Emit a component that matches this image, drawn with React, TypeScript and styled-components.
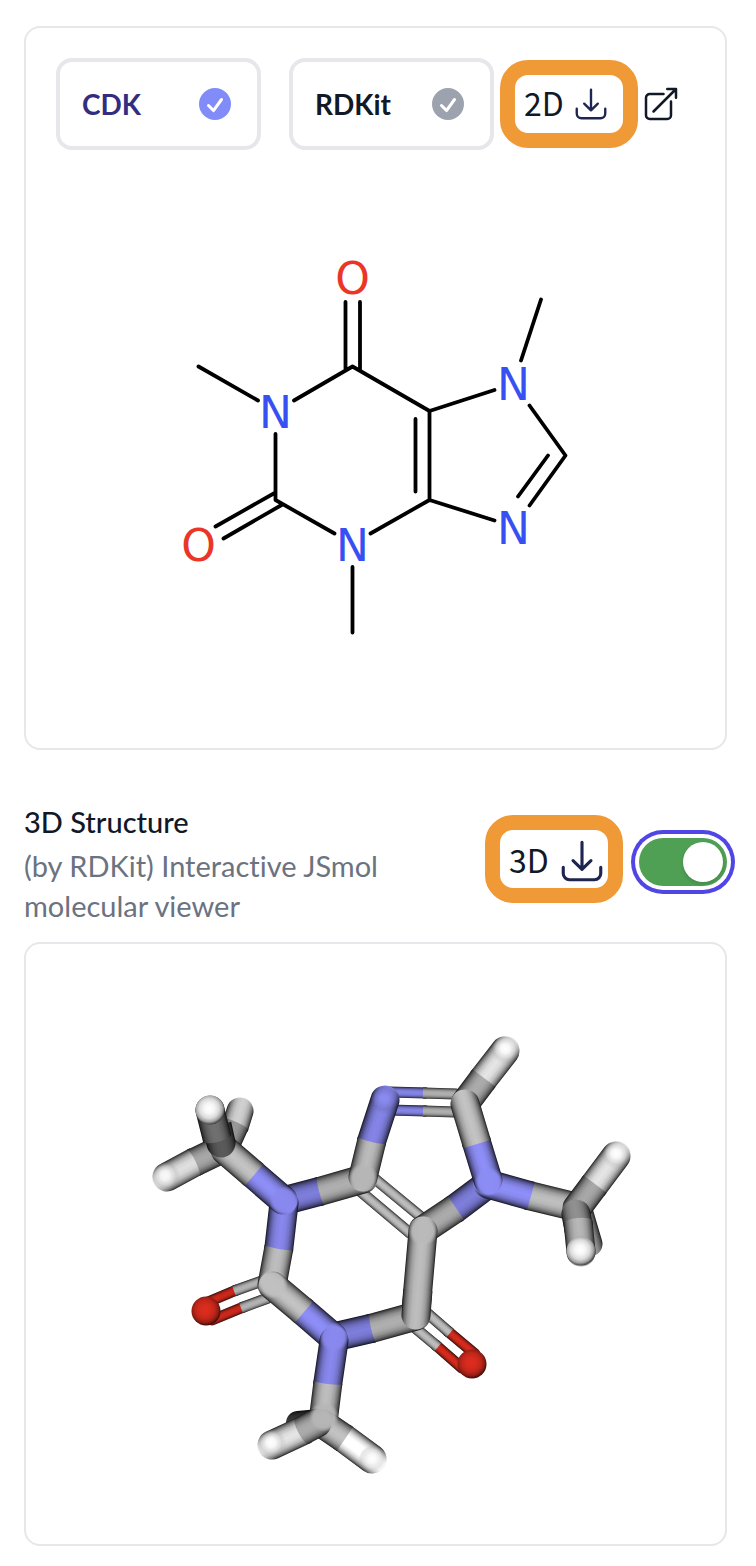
import React, { useState } from "react";
import styled, { createGlobalStyle } from "styled-components";

const GlobalStyle = createGlobalStyle`
  *, *::before, *::after { box-sizing: border-box; }
  body {
    margin: 0;
    background: #ffffff;
    color: #111827;
    font-family: Lato, "Open Sans", sans-serif;
    font-variant-ligatures: none;
  }
`;

const Page = styled.main`
  padding: 26px 29px 20px 24px;
`;

const Panel = styled.section`
  border: 2px solid #e5e7eb;
  border-radius: 16px;
  background: #ffffff;
`;

const Toolbar = styled.div`
  display: flex;
  align-items: center;
  gap: 6px;
  padding: 30px 30px 0;
`;

const Options = styled.div`
  display: flex;
  flex: 0 1 438px;
  gap: 28px;
`;

const Option = styled.label<{ $active: boolean }>`
  display: flex;
  flex: 1;
  align-items: center;
  justify-content: space-between;
  height: 92px;
  padding: 0 22px;
  border: 4px solid #e5e7eb;
  border-radius: 16px;
  font-size: 28px;
  font-weight: 700;
  line-height: 40px;
  color: ${(p) => (p.$active ? "#312e81" : "#111827")};
  cursor: pointer;

  svg {
    fill: ${(p) => (p.$active ? "#818cf8" : "#9ca3af")};
  }
`;

const HiddenRadio = styled.input`
  appearance: none;
  width: 0;
  height: 0;
  margin: 0;
`;

const Actions = styled.div`
  display: flex;
  flex: none;
  align-items: center;
  gap: 3px;
`;

const DownloadButton = styled.button`
  display: flex;
  flex: none;
  align-items: center;
  gap: 8px;
  width: 138px;
  height: 88px;
  padding: 0 0 0 9px;
  border: 15px solid #f09937;
  border-radius: 28px;
  background: #ffffff;
  color: #111827;
  font-family: "Noto Sans CJK SC", "Noto Sans", sans-serif;
  font-size: 32px;
  line-height: 40px;
  cursor: pointer;

  svg {
    flex: none;
    color: #1e2550;
  }
`;

const ButtonLabel = styled.span`
  padding-bottom: 4px;
`;

const IconLink = styled.a`
  display: flex;
  flex: none;
  color: #111827;
`;

const Drawing = styled.svg`
  display: block;
  width: 100%;
  height: auto;
`;

const AtomLabel = styled.text<{ $element: "N" | "O" }>`
  font-family: "DejaVu Sans", sans-serif;
  font-size: 44px;
  text-anchor: middle;
  fill: ${(p) => (p.$element === "N" ? "#3850f2" : "#ea3628")};
`;

const SectionHeader = styled.header`
  display: flex;
  align-items: center;
  gap: 16px;
  padding: 48px 0 16px;
`;

const Heading = styled.div`
  flex: 1;
  font-size: 29px;
`;

const Title = styled.h2`
  margin: 0;
  font-size: inherit;
  font-weight: 500;
  line-height: 48px;
`;

const Description = styled.p`
  max-width: 400px;
  margin: 0;
  color: #6b7280;
  line-height: 40px;
`;

const HeaderDownload = styled(DownloadButton)`
  align-self: flex-start;
  margin-top: 17px;
  padding-top: 4px;
`;

const Switch = styled.input`
  appearance: none;
  flex: none;
  width: 88px;
  height: 48px;
  margin: 0;
  padding: 4px;
  border-radius: 24px;
  background: #9ca3af;
  box-shadow: 0 0 0 4px #ffffff, 0 0 0 8px #4f46e5;
  cursor: pointer;

  &::before {
    content: "";
    display: block;
    width: 40px;
    height: 40px;
    border-radius: 50%;
    background: #ffffff;
    box-shadow: 0 2px 4px rgba(0, 0, 0, 0.15);
  }

  &:checked {
    background: #4fa055;
  }

  &:checked::before {
    margin-left: 40px;
  }
`;

function CheckIcon() {
  return (
    <svg width="40" height="40" viewBox="0 0 20 20" aria-hidden="true">
      <path
        fillRule="evenodd"
        d="M10 18a8 8 0 100-16 8 8 0 000 16zm3.857-9.809a.75.75 0 00-1.214-.882l-3.483 4.79-1.88-1.88a.75.75 0 10-1.06 1.061l2.5 2.5a.75.75 0 001.137-.089l4-5.5z"
      />
    </svg>
  );
}

function StrokeIcon({ size, d }: { size: number; d: string }) {
  return (
    <svg
      width={size}
      height={size}
      viewBox="0 0 24 24"
      fill="none"
      stroke="currentColor"
      strokeWidth="1.5"
      strokeLinecap="round"
      strokeLinejoin="round"
      aria-hidden="true"
    >
      <path d={d} />
    </svg>
  );
}

const DOWNLOAD =
  "M3 15v3A3 3 0 006 21h12A3 3 0 0021 18V15M16.3 11.8L12 16m0 0L7.7 11.8m4.3 4.2V3";
const EXTERNAL =
  "M13.5 6H5.25A2.25 2.25 0 003 8.25v10.5A2.25 2.25 0 005.25 21h10.5A2.25 2.25 0 0018 18.75V10.5m-10.5 6L21 3m0 0h-5.25M21 3v5.25";

const FLAT_BONDS = [
  "M345.5 302V369M360 302V370",
  "M294 400.5L352.5 366.5L429.5 411V500L370.5 533.5",
  "M198.5 366.5L258 400.5",
  "M275.5 434V500L334.5 533.5",
  "M275.5 492.5L215.5 526.5M282.5 504.5L223.5 538.5",
  "M352.5 567V632.5",
  "M415.5 419V491.5",
  "M429.5 411L494.5 390M429.5 500L494.5 520.5",
  "M521 360.5L541 299.5",
  "M529.5 405.5L565.5 455.5L529.5 505.5M548 455.5L518 496.5",
];

const FLAT_ATOMS: Array<["N" | "O", number, number]> = [
  ["O", 352.5, 278],
  ["O", 198.5, 545],
  ["N", 275.5, 411.5],
  ["N", 352.5, 544.5],
  ["N", 513.5, 384],
  ["N", 513.5, 527.5],
];

function FlatMolecule() {
  return (
    <Drawing viewBox="26 150 699 598" role="img" aria-label="2D structure of caffeine">
      <path
        d={FLAT_BONDS.join("")}
        fill="none"
        stroke="#000000"
        strokeWidth="3.8"
        strokeLinecap="round"
        strokeLinejoin="round"
      />
      {FLAT_ATOMS.map(([element, x, y]) => (
        <AtomLabel key={`${x}-${y}`} $element={element} x={x} y={y + 16}>
          {element}
        </AtomLabel>
      ))}
    </Drawing>
  );
}

type Rgb = [number, number, number];
type Point = [number, number];

const CARBON: Rgb = [196, 196, 196];
const NITROGEN: Rgb = [143, 143, 250];
const OXYGEN: Rgb = [222, 44, 30];
const HYDROGEN: Rgb = [255, 255, 255];

const shade = (c: Rgb, k: number) => `rgb(${c.map((v) => Math.min(255, Math.round(v * k))).join(",")})`;

// Brightness across a cylinder, from one silhouette edge to the other.
const ROD_STOPS: Array<[number, number]> = [
  [0, 0.12],
  [0.05, 0.4],
  [0.12, 0.62],
  [0.22, 0.83],
  [0.35, 0.96],
  [0.5, 1],
  [0.65, 0.96],
  [0.78, 0.83],
  [0.88, 0.62],
  [0.95, 0.4],
  [1, 0.12],
];

interface RodProps {
  id: string;
  from: Point;
  to: Point;
  color: Rgb;
  r?: number;
  light?: number;
  cap?: number;
  extend?: number;
}

// A shaded cylinder; cap is the bulge (or, below zero, the hollow) of its far end.
function Rod({ id, from, to, color, r = 14.5, light = 0.97, cap = 0, extend = 0 }: RodProps) {
  const dx = to[0] - from[0];
  const dy = to[1] - from[1];
  const length = Math.hypot(dx, dy) + extend;
  const angle = (Math.atan2(dy, dx) * 180) / Math.PI;
  return (
    <g transform={`translate(${from[0]} ${from[1]}) rotate(${angle})`}>
      <linearGradient id={id} gradientUnits="userSpaceOnUse" x1="0" y1={-r} x2="0" y2={r}>
        {ROD_STOPS.map(([offset, k]) => (
          <stop key={offset} offset={offset} stopColor={shade(color, k * light)} />
        ))}
      </linearGradient>
      <path
        d={`M0 ${-r}H${length}A${Math.abs(cap)} ${r} 0 0 ${cap < 0 ? 0 : 1} ${length} ${r}H0A${r} ${r} 0 0 1 0 ${-r}Z`}
        fill={`url(#${id})`}
      />
    </g>
  );
}

interface BallProps {
  id: string;
  at: Point;
  color: Rgb;
  r?: number;
  light?: number;
  fade?: boolean;
}

// A shaded sphere; with fade, its rim blends into the cylinder that it ends.
function Ball({ id, at, color, r = 14, light = 1, fade = false }: BallProps) {
  return (
    <>
      <radialGradient id={id} cx="0.47" cy="0.45" r="0.56">
        <stop offset="0" stopColor={shade(color, light)} />
        <stop offset="0.3" stopColor={shade(color, light * 0.97)} />
        <stop offset="0.6" stopColor={shade(color, light * 0.86)} stopOpacity={fade ? 0.6 : 1} />
        <stop offset="0.82" stopColor={shade(color, light * 0.64)} stopOpacity={fade ? 0.1 : 1} />
        <stop offset="1" stopColor={shade(color, light * 0.2)} stopOpacity={fade ? 0 : 1} />
      </radialGradient>
      <circle cx={at[0]} cy={at[1]} r={r} fill={`url(#${id})`} />
    </>
  );
}

// Smooths the place where several cylinders run into one atom.
function Joint({ id, at, color, light = 0.95 }: BallProps) {
  return (
    <>
      <radialGradient id={id}>
        <stop offset="0" stopColor={shade(color, light)} />
        <stop offset="0.7" stopColor={shade(color, light)} stopOpacity="0.9" />
        <stop offset="1" stopColor={shade(color, light)} stopOpacity="0" />
      </radialGradient>
      <circle cx={at[0]} cy={at[1]} r="15" fill={`url(#${id})`} />
    </>
  );
}

interface BondProps {
  id: string;
  a: Point;
  mid: Point;
  b: Point;
  colors: [Rgb, Rgb];
  r?: number;
  light?: [number, number];
  cap?: number;
}

// Two half cylinders that meet at mid, each in the colour of its own atom.
function Bond({ id, a, mid, b, colors, r, light = [0.97, 0.97], cap = 2 }: BondProps) {
  return (
    <>
      <Rod id={`${id}b`} from={b} to={mid} color={colors[1]} r={r} light={light[1]} extend={4} />
      <Rod id={`${id}a`} from={a} to={mid} color={colors[0]} r={r} light={light[0]} cap={cap} />
    </>
  );
}

function SolidMolecule() {
  return (
    <Drawing viewBox="26 944 699 600" role="img" aria-label="3D model of caffeine">
      {/* Upper left methyl group */}
      <Bond id="m1b" a={[226, 1146]} mid={[236, 1124]} b={[240, 1111]} colors={[CARBON, HYDROGEN]} r={13.5} light={[0.78, 0.82]} />
      <Bond id="m1c" a={[222, 1149]} mid={[193, 1163]} b={[167, 1177]} colors={[CARBON, HYDROGEN]} light={[0.86, 0.88]} cap={-3} />
      <Ball id="m1d" at={[166, 1177]} color={HYDROGEN} light={0.98} fade />

      {/* Double bonds */}
      <Bond id="d1" a={[456, 1094]} mid={[423, 1093]} b={[388, 1092]} colors={[CARBON, NITROGEN]} r={5.5} light={[0.9, 0.93]} cap={0} />
      <Bond id="d2" a={[456, 1112]} mid={[423, 1111]} b={[388, 1110]} colors={[CARBON, NITROGEN]} r={5.5} light={[0.9, 0.93]} cap={0} />
      <Rod id="d3" from={[375, 1179]} to={[426, 1221]} color={CARBON} r={5.5} />
      <Rod id="d4" from={[360, 1191]} to={[411, 1234]} color={CARBON} r={5.5} />
      <Bond id="d5" a={[262, 1281]} mid={[234, 1291]} b={[208, 1302]} colors={[CARBON, OXYGEN]} r={5.5} light={[0.92, 0.92]} cap={0} />
      <Bond id="d6" a={[268, 1298]} mid={[241, 1308]} b={[212, 1320]} colors={[CARBON, OXYGEN]} r={5.5} light={[0.92, 0.92]} cap={0} />
      <Bond id="d7" a={[427, 1313]} mid={[450, 1333]} b={[475, 1354]} colors={[CARBON, OXYGEN]} r={5.5} cap={0} />
      <Bond id="d8" a={[414, 1327]} mid={[438, 1347]} b={[462, 1368]} colors={[CARBON, OXYGEN]} r={5.5} cap={0} />
      <Ball id="o1" at={[206, 1311]} color={OXYGEN} r={14.5} />
      <Ball id="o2" at={[472, 1364]} color={OXYGEN} r={14.5} />

      {/* Hydrogen of the five-membered ring */}
      <Bond id="h1" a={[466, 1102]} mid={[484, 1078]} b={[505, 1051]} colors={[CARBON, HYDROGEN]} light={[0.88, 0.9]} cap={0} />
      <Ball id="h1d" at={[506, 1050]} color={HYDROGEN} fade />

      {/* Ring bonds */}
      <Bond id="r1" a={[283, 1201]} mid={[321, 1191]} b={[363, 1179]} colors={[NITROGEN, CARBON]} light={[0.88, 0.9]} cap={-2} />
      <Bond id="r2" a={[363, 1177]} mid={[372, 1140]} b={[385, 1100]} colors={[CARBON, NITROGEN]} light={[0.96, 0.93]} cap={-2} />
      <Ball id="r2n" at={[385, 1100]} color={NITROGEN} light={0.97} fade />
      <Joint id="j1" at={[363, 1178]} color={CARBON} light={0.93} />
      <Bond id="r3" a={[423, 1230]} mid={[456, 1208]} b={[488, 1184]} colors={[CARBON, NITROGEN]} light={[0.88, 0.88]} cap={0} />
      <Rod id="r5" from={[423, 1231]} to={[416, 1310]} color={CARBON} />
      <Joint id="j2" at={[423, 1231]} color={CARBON} />
      <Bond id="r6" a={[334, 1337]} mid={[373, 1328]} b={[416, 1316]} colors={[NITROGEN, CARBON]} light={[0.88, 0.9]} cap={-2} />
      <Rod id="r7" from={[416, 1315]} to={[418, 1290]} color={CARBON} />
      <Bond id="r8" a={[272, 1285]} mid={[279, 1247]} b={[284, 1203]} colors={[CARBON, NITROGEN]} light={[0.97, 0.95]} cap={-2} />
      <Bond id="r9" a={[273, 1286]} mid={[304, 1312]} b={[333, 1337]} colors={[CARBON, NITROGEN]} light={[1, 1]} cap={0} />
      <Joint id="j3" at={[273, 1284]} color={CARBON} light={0.98} />
      <Bond id="m1a" a={[225, 1150]} mid={[254, 1175]} b={[283, 1200]} colors={[CARBON, NITROGEN]} light={[1, 1]} cap={0} />
      <Joint id="j4" at={[284, 1201]} color={NITROGEN} />

      {/* Front hydrogen of the upper left methyl group */}
      <Rod id="m1e" from={[221, 1143]} to={[217, 1125]} color={CARBON} light={0.46} />
      <Rod id="m1f" from={[210, 1110]} to={[217, 1138]} color={HYDROGEN} light={0.44} cap={4} />
      <Ball id="m1g" at={[210, 1110]} color={HYDROGEN} r={14.5} />

      {/* Right methyl group */}
      <Rod id="m2a" from={[590, 1244]} to={[580, 1210]} color={CARBON} r={12.5} light={0.8} />
      <Bond id="m2b" a={[488, 1184]} mid={[531, 1196]} b={[576, 1207]} colors={[NITROGEN, CARBON]} light={[1, 0.98]} cap={0} />
      <Bond id="r4" a={[465, 1104]} mid={[477, 1144]} b={[488, 1180]} colors={[CARBON, NITROGEN]} light={[1, 1]} cap={0} />
      <Joint id="j5" at={[489, 1182]} color={NITROGEN} light={0.98} />
      <Bond id="m2c" a={[577, 1208]} mid={[595, 1184]} b={[616, 1156]} colors={[CARBON, HYDROGEN]} light={[0.86, 0.9]} cap={0} />
      <Ball id="m2d" at={[617, 1155]} color={HYDROGEN} fade />
      <Rod id="m2e" from={[576, 1214]} to={[579, 1230]} color={CARBON} light={0.74} />
      <Rod id="m2f" from={[581, 1252]} to={[578, 1222]} color={HYDROGEN} light={0.72} cap={4} />
      <Ball id="m2g" at={[581, 1251]} color={HYDROGEN} r={14.5} />

      {/* Bottom methyl group */}
      <Rod id="m3a" from={[298, 1423]} to={[320, 1421]} color={CARBON} r={12} light={0.3} />
      <Bond id="m3b" a={[323, 1422]} mid={[328, 1382]} b={[334, 1341]} colors={[CARBON, NITROGEN]} light={[0.97, 0.95]} cap={-2} />
      <Joint id="j6" at={[334, 1337]} color={NITROGEN} />
      <Bond id="m3c" a={[323, 1424]} mid={[345, 1439]} b={[372, 1459]} colors={[CARBON, HYDROGEN]} light={[1, 1.04]} cap={0} />
      <Ball id="m3d" at={[373, 1460]} color={HYDROGEN} fade />
      <Bond id="m3e" a={[317, 1423]} mid={[302, 1431]} b={[272, 1445]} colors={[CARBON, HYDROGEN]} light={[0.88, 0.9]} cap={4} />
      <Joint id="j7" at={[324, 1417]} color={CARBON} light={0.93} />
      <Ball id="m3f" at={[272, 1444]} color={HYDROGEN} fade />
    </Drawing>
  );
}

const TOOLKITS = ["CDK", "RDKit"];

export default function App() {
  const [toolkit, setToolkit] = useState("CDK");
  const [interactive, setInteractive] = useState(true);

  return (
    <>
      <GlobalStyle />
      <Page>
        <Panel>
          <Toolbar>
            <Options role="radiogroup" aria-label="Toolkit">
              {TOOLKITS.map((name) => (
                <Option key={name} $active={toolkit === name}>
                  <span>
                    <HiddenRadio
                      type="radio"
                      name="toolkit"
                      checked={toolkit === name}
                      onChange={() => setToolkit(name)}
                    />
                    {name}
                  </span>
                  <CheckIcon />
                </Option>
              ))}
            </Options>
            <Actions>
              <DownloadButton type="button">
                <ButtonLabel>2D</ButtonLabel>
                <StrokeIcon size={38} d={DOWNLOAD} />
              </DownloadButton>
              <IconLink href="#" aria-label="Open in a new window">
                <StrokeIcon size={40} d={EXTERNAL} />
              </IconLink>
            </Actions>
          </Toolbar>
          <FlatMolecule />
        </Panel>

        <SectionHeader>
          <Heading>
            <Title id="viewer-title">3D Structure</Title>
            <Description>(by RDKit) Interactive JSmol molecular viewer</Description>
          </Heading>
          <HeaderDownload type="button">
            <ButtonLabel>3D</ButtonLabel>
            <StrokeIcon size={50} d={DOWNLOAD} />
          </HeaderDownload>
          <Switch
            type="checkbox"
            role="switch"
            aria-labelledby="viewer-title"
            checked={interactive}
            onChange={(e) => setInteractive(e.target.checked)}
          />
        </SectionHeader>

        <Panel>
          <SolidMolecule />
        </Panel>
      </Page>
    </>
  );
}
